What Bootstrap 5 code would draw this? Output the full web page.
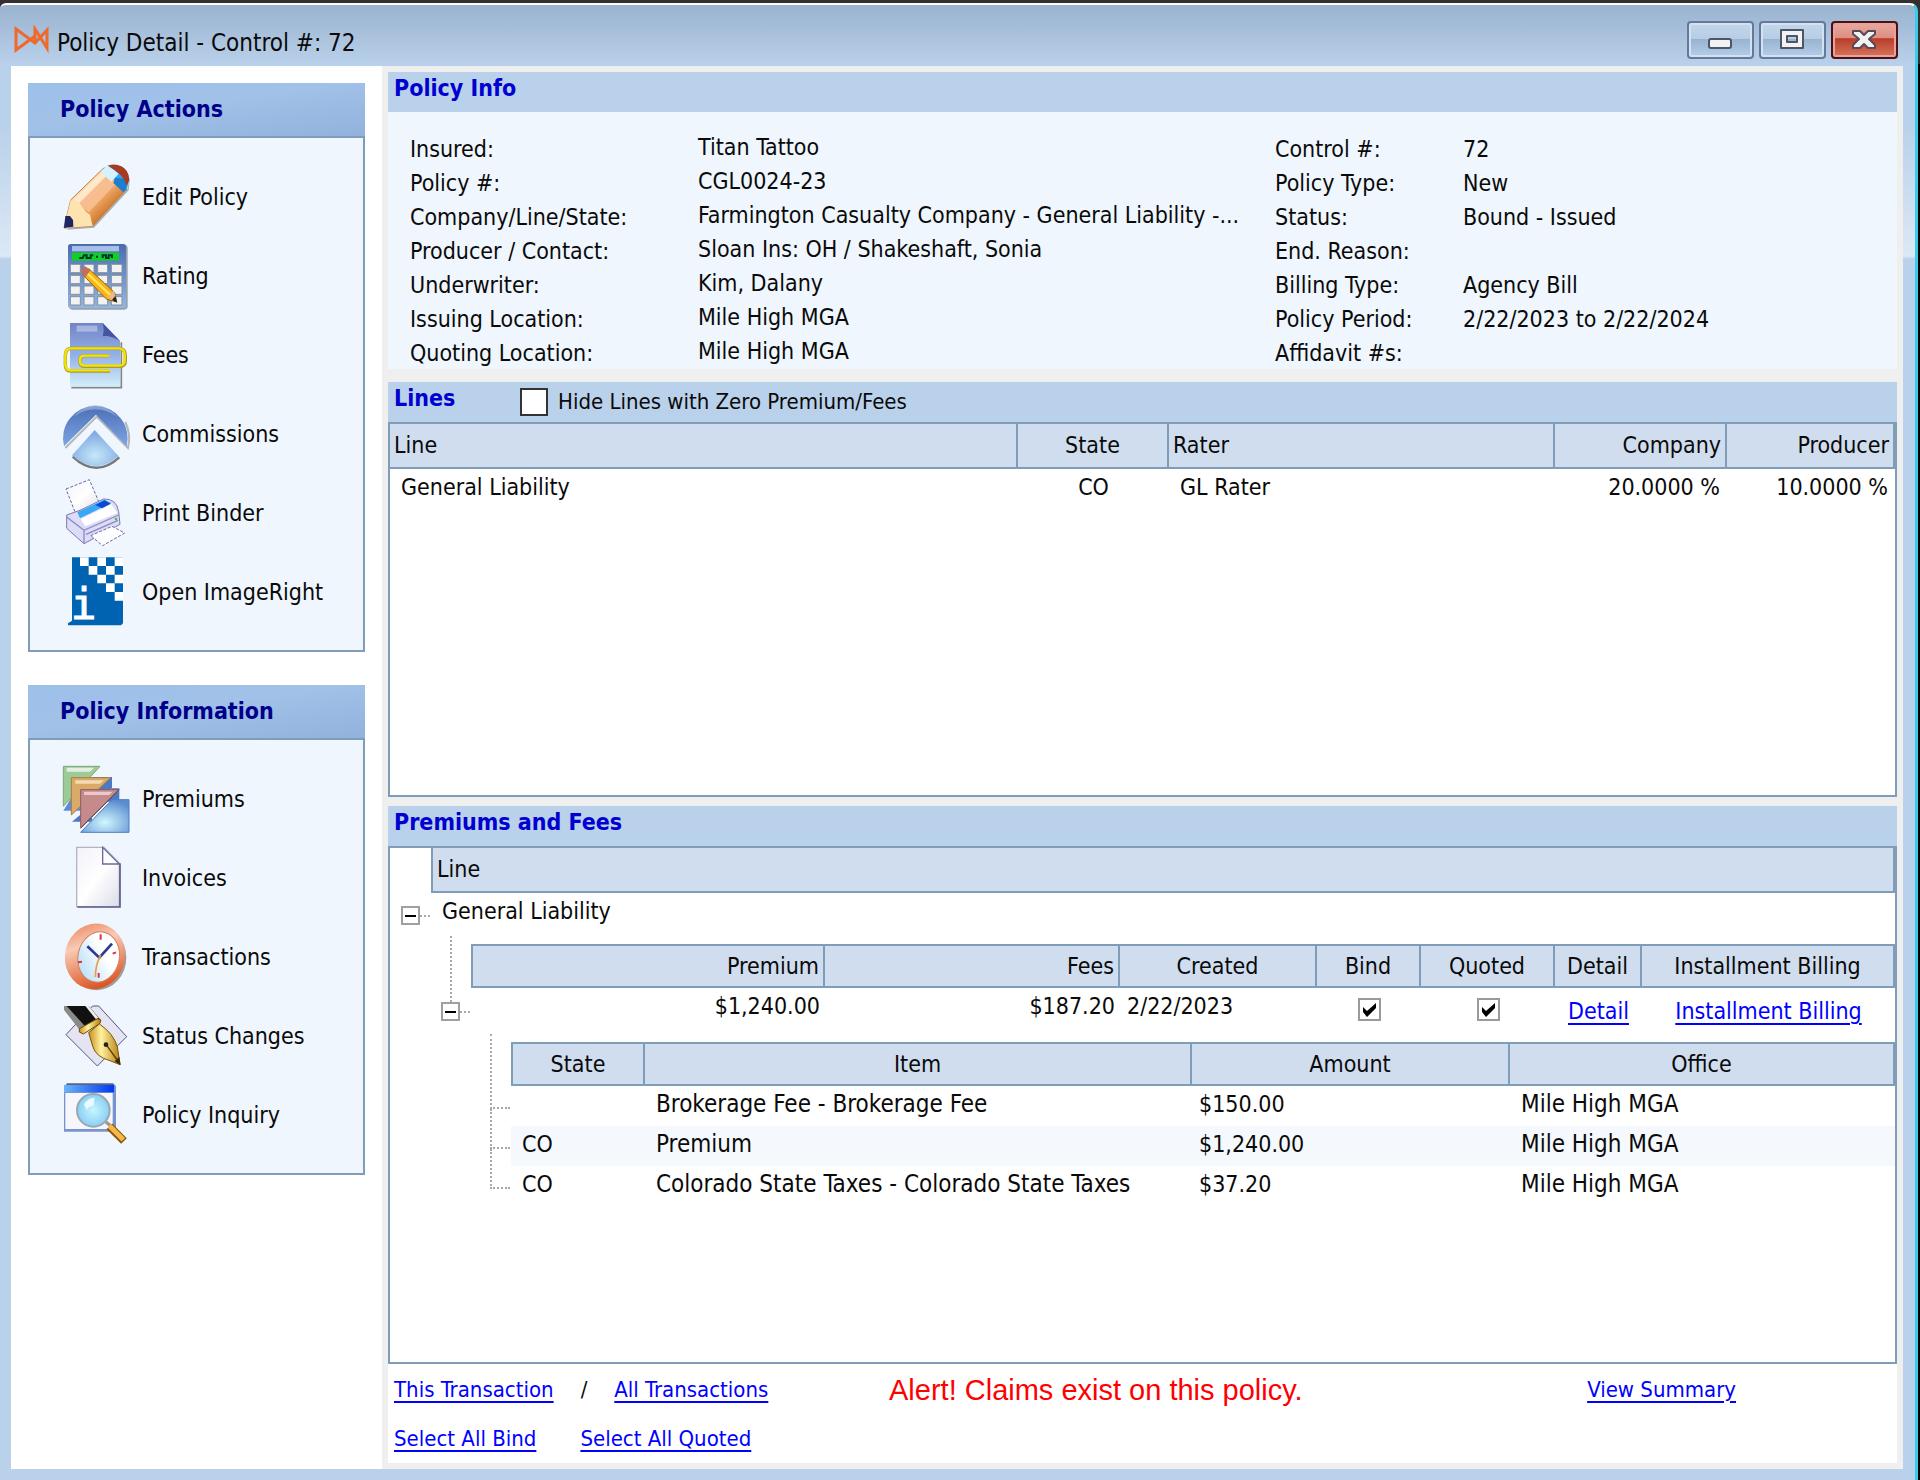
<!DOCTYPE html>
<html lang="en">
<head>
<meta charset="utf-8">
<meta name="viewport" content="width=device-width, initial-scale=1">
<title>Policy Detail - Control #: 72</title>
<link href="https://cdn.jsdelivr.net/npm/bootstrap@5.3.0/dist/css/bootstrap.min.css" rel="stylesheet">
<style>
:root{--line:#7f9db9;--bar:#b9d1ea;--head:#cfddee;--pale:#eff6fd;--face:#efefef;--ink:#0a0a0a;--link:#0000ff}
body{font-family:"DejaVu Sans Condensed","DejaVu Sans",Tahoma,sans-serif;font-size:23px;line-height:30px;color:var(--ink);background:#000}
a,a:hover{color:var(--link);text-decoration:underline;text-decoration-thickness:2px;text-underline-offset:4px}
.os-edge{background:linear-gradient(#35302f,#35302f) top/100% 64px no-repeat #000;padding:3px 2px 0 0}
.app-window{min-height:calc(100vh - 3px);background:linear-gradient(to bottom,#9ab4d0 0,#a5bdd8 22px,var(--bar) 60px,#b9d1ea 120px,#dce8f5 251px,var(--bar) 254px);border-top:2px solid #fbfdff;border-right:3px solid #35cdea;border-radius:6px 8px 0 0;padding:0 12px 11px 11px}
.title-bar{height:61px;padding:16px 5px 0 3px}
.title-text{font-size:24px;margin-left:7px}
.cap-group{gap:5px}
.cap-btn{width:67px;height:38px;padding:0;border:2px solid #65799a;border-radius:4px;background:linear-gradient(#c3d6ea 0,#b8cde4 46%,#98b3d0 47%,#b4cfec 100%);box-shadow:inset 0 0 0 2px #d3e1f0}
.cap-close{border-color:#4c1017;background:linear-gradient(#eaa99e 0,#dd8e82 44%,#b93d28 46%,#d8755f 100%);box-shadow:inset 0 0 0 2px #e5a399}
.side-pane{width:371px;padding:17px 17px 0;background:#fff}
.side-box{margin-bottom:33px;border:2px solid var(--line);border-top:0;background:var(--pale)}
.side-head{margin:0 -2px;height:55px;padding-left:32px;border-bottom:2px solid var(--line);background:linear-gradient(172deg,#9dc0e9,#a1c1e8 45%,#92b1dc);color:#00008b;font-size:23px}
.side-list{padding:19px 0 19px 32px}
.side-list a{height:79px;color:var(--ink);text-decoration:none;gap:12px}
.side-list svg{width:68px;height:68px;overflow:visible;flex:none}
.work-pane{background:var(--face);padding:6px}
.sec-bar{background:var(--bar);height:40px;padding:2px 6px}
.sec-title{color:#0000d0;font-size:23px;line-height:28px}
.lines-title{width:126px}
.lines-sec{margin-top:13px}
.prem-sec{margin-top:9px}
.info-body{background:var(--pale);padding:20px 22px 0;height:257px}
.info-body dl{display:grid;grid-auto-rows:34px;line-height:34px}
.info-body dt{font-weight:400}
.info-left{grid-template-columns:288px minmax(0,1fr);width:865px}
.info-left dd{line-height:30px}
.info-right{grid-template-columns:188px minmax(0,1fr)}
.tick{appearance:none;flex:none;margin:0;border:2px solid #333;border-radius:0;background:#fff;width:28px;height:28px}
.tick-label{font-size:22px}
.tick-cell{width:23px;height:23px;border-color:#9a9a9a;vertical-align:top}
.tick-cell:checked{background:#fff url("data:image/svg+xml,%3Csvg xmlns='http://www.w3.org/2000/svg' viewBox='0 0 19 19'%3E%3Cpath d='M3 7v5l4 5 9-9V3l-9 8z'/%3E%3C/svg%3E") center/19px no-repeat}
.grid-frame{background:#fff;border:2px solid var(--line)}
.lines-frame{height:375px}
.grid-tbl{table-layout:fixed;border-collapse:separate;border-spacing:0;margin:0;color:var(--ink)}
.grid-tbl>:not(caption)>*>*{padding:0 7px;border:0;background:transparent;color:var(--ink);vertical-align:top;overflow:hidden;white-space:nowrap}
.grid-tbl>thead>tr>th{height:45px;padding:0 4px;line-height:43px;font-weight:400;background:var(--head);border-right:2px solid var(--line);border-bottom:2px solid var(--line)}
.grid-tbl>tbody>tr>td{height:40px;line-height:36px}
.sub-tbl>thead>tr>th{height:44px;border-top:2px solid var(--line);line-height:40px}
.sub-tbl>thead>tr>th:first-child,.tree-tbl>thead>tr>th:first-child{border-left:2px solid var(--line)}
.grid-tbl>tbody>tr>td.pad-l{padding-left:11px}
.grid-tbl>tbody>tr>td.wide-txt{padding-left:11px;font-size:24px}
.premium-tbl>tbody>tr>td{height:46px}
.premium-tbl>tbody>tr>td.text-end{padding-right:5px}
.premium-tbl>tbody>tr>td.drop{padding:10px 0 0;line-height:26px}
.fee-tbl>tbody>tr:nth-child(even)>td{background:#f5f9fd}
.gut-1{width:41px;padding:58px 0 0 11px}
.gut-2{width:81px;padding-left:51px}
.gut-3{width:121px;padding-left:100px}
.twig-v{width:11px;height:66px;border-right:2px dotted #a8a8a8}
.twig-h{width:10px;margin-top:9px;border-top:2px dotted #a8a8a8}
.branch{width:20px;height:40px;border-left:2px dotted #a8a8a8;border-bottom:2px dotted #a8a8a8}
.branch-first{height:75px}
.fold-btn{width:19px;height:19px;padding:0;border:2px solid #a0a0a0;background:#fff}
.fold-btn span{width:11px;height:2px;background:#000}
.level-2{padding-top:3px}
.nest{padding-top:8px}
.foot-pane{background:#fff;padding:11px 6px 9px;font-size:22px;row-gap:19px}
.foot-alert{font:29px/30px "Liberation Sans",Arial,sans-serif;color:#f00}
.foot-left{width:495px}
.foot-slash{padding:0 27px}
.foot-select{gap:44px}
.foot-view{margin-right:155px}
</style>
<script src="https://cdn.jsdelivr.net/npm/bootstrap@5.3.0/dist/js/bootstrap.bundle.min.js"></script>
</head>
<body>
<svg width="0" height="0" class="position-absolute" aria-hidden="true"><defs>
<linearGradient id="gWood" x1="0" y1="0" x2="1" y2="1"><stop offset=".3" stop-color="#ffe3bd"/><stop offset=".5" stop-color="#f5b27a"/><stop offset=".75" stop-color="#c96f1c"/></linearGradient>
<linearGradient id="gBlue" x1="0" y1="0" x2="0" y2="1"><stop offset="0" stop-color="#7284c6"/><stop offset=".5" stop-color="#93b0e6"/><stop offset="1" stop-color="#d2eefa"/></linearGradient>
<linearGradient id="gCalc" x1="0" y1="0" x2="0" y2="1"><stop offset="0" stop-color="#4a6cb0"/><stop offset="1" stop-color="#90b8e2"/></linearGradient>
<linearGradient id="gDisc" x1="0" y1="0" x2="0" y2="1"><stop offset="0" stop-color="#4c6fb4"/><stop offset="1" stop-color="#7fa5e6"/></linearGradient>
<radialGradient id="gFan" cx=".5" cy=".7" r=".6"><stop offset="0" stop-color="#c6e8f8"/><stop offset="1" stop-color="#83abe4"/></radialGradient>
<linearGradient id="gPage" x1="0" y1="0" x2="1" y2="1"><stop offset="0" stop-color="#f2f2fa"/><stop offset=".5" stop-color="#fff"/><stop offset="1" stop-color="#dcdce8"/></linearGradient>
<linearGradient id="gRim" x1="0" y1="0" x2=".6" y2="1"><stop offset="0" stop-color="#e8754a"/><stop offset=".4" stop-color="#f9cbb6"/><stop offset="1" stop-color="#dc5523"/></linearGradient>
<linearGradient id="gFace" x1="0" y1="1" x2="1" y2="0"><stop offset="0" stop-color="#a8d8f8"/><stop offset=".6" stop-color="#fff"/></linearGradient>
<linearGradient id="gGold" x1="0" y1="0" x2="1" y2="0"><stop offset="0" stop-color="#c8901c"/><stop offset=".4" stop-color="#fff2a0"/><stop offset="1" stop-color="#b8800c"/></linearGradient>
<linearGradient id="gWin" x1="0" y1="0" x2="1" y2="0"><stop offset="0" stop-color="#6cb4f6"/><stop offset="1" stop-color="#0038f0"/></linearGradient>
<radialGradient id="gLens" cx=".5" cy=".5" r=".5"><stop offset="0" stop-color="#c8f4ff"/><stop offset="1" stop-color="#8ad0f4"/></radialGradient>
<radialGradient id="gCard" cx=".5" cy=".7" r=".7"><stop offset="0" stop-color="#d0f8ff"/><stop offset="1" stop-color="#5c8cd0"/></radialGradient>
</defs></svg>

<div class="os-edge">
<div class="app-window d-flex flex-column">
  <header class="title-bar d-flex align-items-start">
    <svg class="mt-1" width="36" height="28" viewBox="0 0 36 28" fill="none" stroke="#ee6a2c" stroke-width="3" aria-hidden="true"><path d="M21 11L2 25V4l19 14L33 5v18L21 4v14"/></svg>
    <h1 class="title-text mb-0 mt-2 flex-grow-1">Policy Detail - Control #: 72</h1>
    <div class="cap-group d-flex">
      <button type="button" class="cap-btn" aria-label="Minimize"><svg class="d-block" width="63" height="34" viewBox="0 0 63 34"><rect x="20" y="16" width="22" height="9" rx="2" fill="#f2f2f2" stroke="#4d5666" stroke-width="2"/></svg></button>
      <button type="button" class="cap-btn" aria-label="Maximize"><svg class="d-block" width="63" height="34" viewBox="0 0 63 34"><path d="M20 7h22v18H20zM26 13v6h10v-6z" fill="#f2f2f2" fill-rule="evenodd" stroke="#4d5666" stroke-width="2" stroke-linejoin="round"/></svg></button>
      <button type="button" class="cap-btn cap-close" aria-label="Close"><svg class="d-block" width="63" height="34" viewBox="0 0 63 34"><path d="M20 8h7l4 4 4-4h7v3l-6 5 6 6v3h-7l-4-4-4 4h-7v-3l6-6-6-5z" fill="#f2f2f2" stroke="#5a4a58" stroke-width="2" stroke-linejoin="round"/></svg></button>
    </div>
  </header>

  <div class="d-flex flex-grow-1">
    <aside class="side-pane flex-shrink-0">
      <nav class="side-box" aria-labelledby="t-actions">
        <h2 id="t-actions" class="side-head d-flex align-items-center fw-bold mb-0">Policy Actions</h2>
        <div class="side-list d-flex flex-column">
          <a href="#" class="d-flex align-items-center"><svg viewBox="0 0 204 204" aria-hidden="true"><path d="M14 200l82-6 104-112 4-40-8 36z" fill="#666" opacity=".5"/><path d="M6 195l20-84L124 16l70 62L92 189z" fill="url(#gWood)" stroke="#c47a34" stroke-width="3"/><path d="M46 118l88-88 32 28-86 90z" fill="#f8bd8e"/><path d="M34 112l92-90 14 10-88 88z" fill="#ffe9cc"/><path d="M6 195l20-84 24 6 22 30 12 8 8 34z" fill="#fde3b0"/><path d="M6 195l4-36 14 0 9 12 1 20z" fill="#1f2464"/><path d="M124 16l16-10 62 44-8 30-32-20z" fill="#30a8e8"/><path d="M160 44l36 4-4 32-8 8-30-28z" fill="#1c7fd0"/><path d="M116 26l20-20 34 26-22 24z" fill="#d6f2ff"/><path d="M138 8q20-8 40 2 22 10 24 40l-8 18q-8-34-56-60z" fill="#a83a20"/></svg><span>Edit Policy</span></a>
          <a href="#" class="d-flex align-items-center"><svg viewBox="0 0 204 204" aria-hidden="true"><rect x="21" y="9" width="176" height="194" rx="10" fill="#667" opacity=".6"/><rect x="18" y="6" width="174" height="192" rx="8" fill="url(#gCalc)"/><rect x="30" y="12" width="141" height="16" fill="#a9bee6"/><rect x="30" y="32" width="141" height="24" fill="#10d024"/><path d="M52 48h10l4-8h8v8h12v-8h8M102 44h6m14 4v-8h10v8h8v-8h10v8" stroke="#033" stroke-width="6" fill="none"/><g fill="#f2f2f2" stroke="#8a8f9c" stroke-width="3"><path d="M25 67h30v25H25zM66 67h30v25H66zM107 67h30v25h-30zM148 67h32v25h-32zM25 100h30v25H25zM66 100h30v25H66zM107 100h30v25h-30zM148 100h32v25h-32zM25 132h30v25H25zM66 132h30v25H66zM107 132h30v25h-30zM148 132h32v25h-32zM25 164h30v25H25zM66 164h30v25H66zM107 164h30v25h-30zM148 164h32v25h-32z"/></g><path d="M62 98l18-18 78 72 6 28-30-8z" fill="#f8b414" stroke="#9a6410" stroke-width="3"/><path d="M76 94l74 70" stroke="#ffe45c" stroke-width="7"/><path d="M56 86l12-14 18 12-18 24z" fill="#c0705c"/><path d="M136 164l20-18 8 34z" fill="#e8b890"/><path d="M150 174l10-12 6 20z" fill="#222"/></svg><span>Rating</span></a>
          <a href="#" class="d-flex align-items-center"><svg viewBox="0 0 204 204" aria-hidden="true"><path d="M28 200h150V64" fill="none" stroke="#555" stroke-width="5" opacity=".7"/><path d="M24 6h98l52 54v136H24z" fill="url(#gBlue)"/><path d="M44 14h62v18H44z" fill="#bcc8ee" opacity=".7"/><path d="M122 6l52 54q-30-18-52-14 6-20 0-40z" fill="#4654a4"/><path d="M144 150H26q-16 0-16-18v-28q0-22 18-22h140q22 0 22 20v18q0 16-16 16H68q-14 0-14-14v-4q0-14 14-14h74" fill="none" stroke="#a89c30" stroke-width="10"/><path d="M144 148H26q-16 0-16-18v-28q0-20 18-20h140q20 0 20 18v18q0 16-16 16H68q-14 0-14-14v-4q0-12 14-12h74" fill="none" stroke="#f6e400" stroke-width="7"/></svg><span>Fees</span></a>
          <a href="#" class="d-flex align-items-center"><svg viewBox="0 0 204 204" aria-hidden="true"><path d="M10 144L104 50l94 94q10-40-8-78" fill="none" stroke="#777" stroke-width="6" opacity=".5"/><path d="M6 139A97 97 0 1 1 194 139L102 44z" fill="url(#gDisc)"/><path d="M34 50q66-70 132 0-66-44-132 0z" fill="#a9bfe4" opacity=".6"/><path d="M32 170q70 66 140 2" fill="none" stroke="#777" stroke-width="7"/><path d="M98 90L30 166q70 64 140 3z" fill="url(#gFan)"/></svg><span>Commissions</span></a>
          <a href="#" class="d-flex align-items-center"><svg viewBox="0 0 204 204" aria-hidden="true"><path d="M12 30L82 2l30 70-70 34z" fill="url(#gPage)" stroke="#6a68a0" stroke-width="3" stroke-dasharray="9 5"/><path d="M14 108l40-14 70-34q40-2 46 38l4 38-108 58-52-46z" fill="#dcdcf6" stroke="#7a78b8" stroke-width="3"/><path d="M54 118L46 100l80-38 22 10z" fill="#36a8f4"/><path d="M100 78l28-14 18 10-26 14z" fill="#0c48d8"/><path d="M56 120l92-44 18 26-96 40z" fill="#fff"/><path d="M14 114l52 40 104-46M66 154v40M72 166l96-42" fill="none" stroke="#8c88c8" stroke-width="4"/><path d="M86 170l64-28 38 20-66 38z" fill="#fff" stroke="#6a68a0" stroke-width="3" stroke-dasharray="9 5"/><circle cx="162" cy="120" r="4" fill="#3c4"/></svg><span>Print Binder</span></a>
          <a href="#" class="d-flex align-items-center"><svg viewBox="0 0 204 204" aria-hidden="true"><path d="M30-2h153v198l-6 6H18v-6l12-8z" fill="#0063b1"/><path d="M54-2h26v26H54zM106-2h26v26h-26zM158-2h25v26h-25zM80 24h26v26H80zM132 24h26v26h-26zM106 50h26v26h-26zM158 50h25v26h-25zM132 76h26v26h-26zM158 102h25v26h-25z" fill="#fff"/><text x="26" y="182" font-family="DejaVu Sans Mono" font-size="128" fill="#fff" stroke="#fff" stroke-width="3">i</text></svg><span>Open ImageRight</span></a>
        </div>
      </nav>
      <nav class="side-box" aria-labelledby="t-information">
        <h2 id="t-information" class="side-head d-flex align-items-center fw-bold mb-0">Policy Information</h2>
        <div class="side-list d-flex flex-column">
          <a href="#" class="d-flex align-items-center"><svg viewBox="0 0 204 204" aria-hidden="true"><g stroke-width="3"><path d="M4 137h60V40z" fill="#5c8cd8"/><path d="M4 4h110L4 124z" fill="#9ccb98" stroke="#7ba878"/><path d="M14 8h82l-12 12H14z" fill="#e4efe2"/><path d="M30 170h60V36h60v34z" fill="#4c78c4"/><path d="M28 38h118L28 150z" fill="#d9aa68" stroke="#a87c40"/><path d="M40 46h86l-12 10H40z" fill="#f3dcb4"/><path d="M150 70h22v40h-50z" fill="#4c78c4"/><path d="M56 202h145V104H150z" fill="url(#gCard)" stroke="#4f7cc0"/><path d="M56 74h114L56 188z" fill="#c48a8c" stroke="#905c60"/><path d="M66 80h86l-10 10H66z" fill="#ecc8c8"/><path d="M56 190L172 74" stroke="#555"/></g></svg><span>Premiums</span></a>
          <a href="#" class="d-flex align-items-center"><svg viewBox="0 0 204 204" aria-hidden="true"><path d="M44 10h82l46 48v130H44z" fill="url(#gPage)" stroke="#b4b4c4" stroke-width="4"/><path d="M46 189h128V58" fill="none" stroke="#5c5a90" stroke-width="5"/><path d="M122 10v50h50z" fill="#fff" stroke="#6c6a9c" stroke-width="4"/></svg><span>Invoices</span></a>
          <a href="#" class="d-flex align-items-center"><svg viewBox="0 0 204 204" aria-hidden="true"><ellipse cx="103" cy="104" rx="90" ry="98" fill="#555" opacity=".55"/><ellipse cx="99" cy="100" rx="90" ry="99" transform="rotate(14 99 100)" fill="url(#gRim)"/><ellipse cx="110" cy="102" rx="62" ry="76" transform="rotate(12 110 102)" fill="url(#gFace)" stroke="#d08060" stroke-width="3"/><path d="M76 70l36 34 38-42" fill="none" stroke="#2c3a94" stroke-width="8"/><path d="M116 96q-16 30-16 66" fill="none" stroke="#e0a050" stroke-width="5"/><path d="M116 34v16M110 150v14M152 92l10-4M48 118l12-2" stroke="#e03040" stroke-width="6"/></svg><span>Transactions</span></a>
          <a href="#" class="d-flex align-items-center"><svg viewBox="0 0 204 204" aria-hidden="true"><path d="M92 12l18 0 84 92-88 88-94-94z" fill="#e4e4f2" stroke="#55547c" stroke-width="3"/><path d="M6 12h74l38 44-60 34z" fill="#111"/><path d="M6 12l8 0 60 66-16 12-52-66z" fill="#8a8a8a"/><path d="M70 12h10l30 36-8 4z" fill="#eee"/><path d="M52 80l54-30 10 4-2 10-50 32-12-6z" fill="url(#gGold)" stroke="#6e4c08" stroke-width="3"/><path d="M80 92l32-26q42 28 54 68l8 54-30-12q-44-12-52-44z" fill="url(#gGold)" stroke="#7a5208" stroke-width="3"/><path d="M134 130l36 50" stroke="#5a3c04" stroke-width="4"/><circle cx="132" cy="128" r="7" fill="#222"/><path d="M158 178l14-14 4 26z" fill="#3c2808"/></svg><span>Status Changes</span></a>
          <a href="#" class="d-flex align-items-center"><svg viewBox="0 0 204 204" aria-hidden="true"><path d="M6 16l8-8h142l6 8v136H6z" fill="#7894d0"/><path d="M10 36h142v108H10z" fill="#f6f6fc"/><path d="M6 12h150v22H6z" fill="url(#gWin)"/><path d="M14 9h140" stroke="#334" stroke-width="3"/><path d="M128 120l20 16" stroke="#9a9a9a" stroke-width="10"/><path d="M142 136l44 44" stroke="#8a5408" stroke-width="24"/><path d="M142 134l42 42" stroke="#f4b848" stroke-width="15"/><circle cx="94" cy="88" r="49" fill="url(#gLens)" stroke="#9aa8b4" stroke-width="6"/><path d="M66 70q12-20 32-20l-4 24q-18 2-20 14z" fill="#e8fbff"/></svg><span>Policy Inquiry</span></a>
        </div>
      </nav>
    </aside>

    <main class="work-pane flex-grow-1 d-flex flex-column overflow-hidden">
      <section>
        <div class="sec-bar"><h2 class="sec-title fw-bold mb-0">Policy Info</h2></div>
        <div class="info-body d-flex">
          <dl class="info-left mb-0">
            <dt>Insured:</dt><dd class="mb-0">Titan Tattoo</dd>
            <dt>Policy #:</dt><dd class="mb-0">CGL0024-23</dd>
            <dt>Company/Line/State:</dt><dd class="mb-0 text-nowrap">Farmington Casualty Company - General Liability -...</dd>
            <dt>Producer / Contact:</dt><dd class="mb-0">Sloan Ins: OH / Shakeshaft, Sonia</dd>
            <dt>Underwriter:</dt><dd class="mb-0">Kim, Dalany</dd>
            <dt>Issuing Location:</dt><dd class="mb-0">Mile High MGA</dd>
            <dt>Quoting Location:</dt><dd class="mb-0">Mile High MGA</dd>
          </dl>
          <dl class="info-right mb-0 flex-grow-1">
            <dt>Control #:</dt><dd class="mb-0">72</dd>
            <dt>Policy Type:</dt><dd class="mb-0">New</dd>
            <dt>Status:</dt><dd class="mb-0">Bound - Issued</dd>
            <dt>End. Reason:</dt><dd class="mb-0"></dd>
            <dt>Billing Type:</dt><dd class="mb-0">Agency Bill</dd>
            <dt>Policy Period:</dt><dd class="mb-0">2/22/2023 to 2/22/2024</dd>
            <dt>Affidavit #s:</dt><dd class="mb-0"></dd>
          </dl>
        </div>
      </section>

      <section class="lines-sec">
        <div class="sec-bar d-flex">
          <h2 class="sec-title lines-title fw-bold mb-0">Lines</h2>
          <div class="d-flex align-items-center" style="gap:10px">
            <input class="tick" type="checkbox" id="hideZero"><label class="tick-label" for="hideZero">Hide Lines with Zero Premium/Fees</label>
          </div>
        </div>
        <div class="grid-frame lines-frame">
          <table class="table grid-tbl">
            <colgroup><col><col style="width:151px"><col style="width:386px"><col style="width:172px"><col style="width:168px"></colgroup>
            <thead><tr><th>Line</th><th class="text-center">State</th><th>Rater</th><th class="text-end">Company</th><th class="text-end">Producer</th></tr></thead>
            <tbody><tr><td class="pad-l">General Liability</td><td class="text-center">CO</td><td class="pad-l">GL Rater</td><td class="text-end">20.0000 %</td><td class="text-end">10.0000 %</td></tr></tbody>
          </table>
        </div>
      </section>

      <section class="prem-sec d-flex flex-column flex-grow-1">
        <div class="sec-bar"><h2 class="sec-title fw-bold mb-0">Premiums and Fees</h2></div>
        <div class="grid-frame flex-grow-1">
          <div class="d-flex">
            <div class="gut-1 d-flex align-items-start flex-shrink-0">
              <button type="button" class="fold-btn d-flex align-items-center justify-content-center" aria-label="Collapse General Liability"><span></span></button>
              <span class="twig-h"></span>
            </div>
            <table class="table grid-tbl tree-tbl">
              <thead><tr><th>Line</th></tr></thead>
              <tbody><tr><td class="pad-l">General Liability</td></tr></tbody>
            </table>
          </div>
          <div class="level-2 d-flex">
            <div class="gut-2 flex-shrink-0">
              <div class="twig-v"></div>
              <div class="d-flex">
                <button type="button" class="fold-btn d-flex align-items-center justify-content-center" aria-label="Collapse premium"><span></span></button>
                <span class="twig-h"></span>
              </div>
            </div>
            <div class="nest flex-grow-1">
            <table class="table grid-tbl sub-tbl premium-tbl">
              <colgroup><col><col style="width:295px"><col style="width:197px"><col style="width:104px"><col style="width:134px"><col style="width:87px"><col style="width:253px"></colgroup>
              <thead><tr><th class="text-end">Premium</th><th class="text-end">Fees</th><th class="text-center">Created</th><th class="text-center">Bind</th><th class="text-center">Quoted</th><th class="text-center">Detail</th><th class="text-center">Installment Billing</th></tr></thead>
              <tbody><tr><td class="text-end">$1,240.00</td><td class="text-end">$187.20</td><td>2/22/2023</td><td class="drop text-center"><input class="tick tick-cell" type="checkbox" checked aria-label="Bind"></td><td class="drop text-center"><input class="tick tick-cell" type="checkbox" checked aria-label="Quoted"></td><td class="drop text-center"><a href="#">Detail</a></td><td class="drop text-center"><a href="#">Installment Billing</a></td></tr></tbody>
            </table>
            </div>
          </div>
          <div class="d-flex">
            <div class="gut-3 flex-shrink-0">
              <div class="branch branch-first"></div><div class="branch"></div><div class="branch"></div>
            </div>
            <div class="nest flex-grow-1">
            <table class="table grid-tbl sub-tbl fee-tbl">
              <colgroup><col style="width:134px"><col><col style="width:318px"><col style="width:385px"></colgroup>
              <thead><tr><th class="text-center">State</th><th class="text-center">Item</th><th class="text-center">Amount</th><th class="text-center">Office</th></tr></thead>
              <tbody>
                <tr><td class="pad-l"></td><td class="wide-txt">Brokerage Fee - Brokerage Fee</td><td>$150.00</td><td class="wide-txt">Mile High MGA</td></tr>
                <tr><td class="pad-l">CO</td><td class="wide-txt">Premium</td><td>$1,240.00</td><td class="wide-txt">Mile High MGA</td></tr>
                <tr><td class="pad-l">CO</td><td class="wide-txt">Colorado State Taxes - Colorado State Taxes</td><td>$37.20</td><td class="wide-txt">Mile High MGA</td></tr>
              </tbody>
            </table>
            </div>
          </div>
        </div>
      </section>

      <footer class="foot-pane d-flex flex-column">
        <div class="d-flex">
          <div class="foot-left d-flex"><a href="#">This Transaction</a><span class="foot-slash">/</span><a href="#">All Transactions</a></div>
          <div class="foot-alert flex-grow-1" role="alert">Alert! Claims exist on this policy.</div>
          <a href="#" class="foot-view">View Summary</a>
        </div>
        <div class="foot-select d-flex"><a href="#">Select All Bind</a><a href="#">Select All Quoted</a></div>
      </footer>
    </main>
  </div>
</div>
</div>
</body>
</html>
